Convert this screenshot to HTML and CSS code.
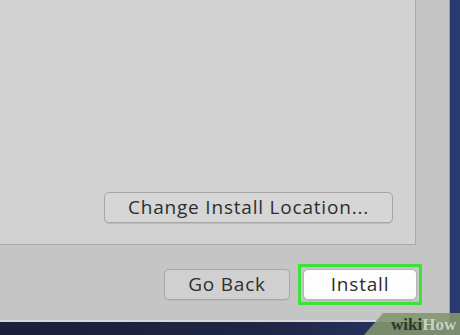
FILE: index.html
```html
<!DOCTYPE html>
<html>
<head>
<meta charset="utf-8">
<link rel="stylesheet" href="styles.css">
</head>
<body>
<div class="desk">
  <div class="window">
    <div class="pane">
      <button class="btn loc">Change Install Location...</button>
    </div>
    <div class="footer">
      <button class="btn back">Go Back</button>
      <span class="hl"><button class="btn install">Install</button></span>
    </div>
  </div>
  <div class="wm"><span class="wiki">wiki</span><span class="how">How</span></div>
</div>
</body>
</html>
```
FILE: styles.css
```css
html, body { margin: 0; padding: 0; }
body { width: 460px; height: 335px; overflow: hidden; background: #1b2140; }
.desk {
  position: relative;
  width: 460px; height: 335px;
  background: linear-gradient(90deg, #1a1e38 0%, #1f2646 60%, #2b3a72 100%);
}
.window {
  width: 449px; height: 320px;
  background: #c5c5c5;
  border-bottom: 2px solid #d9d9d9;
  display: flex; flex-direction: column;
  box-shadow: 1px 0 0 #9a9aa0;
}
.pane {
  width: 416px; height: 245px;
  background: #d2d2d2;
  border-right: 1px solid #a9a9a9;
  border-bottom: 1px solid #a9a9a9;
  display: flex; justify-content: flex-end; align-items: flex-end;
  box-sizing: border-box;
  padding: 0 22px 21px 0;
}
.btn {
  font-family: "Open Sans", "Liberation Sans", Arial, sans-serif;
  font-size: 19px;
  font-weight: 500;
  color: #2e2e2e;
  border: 1px solid #a6a6a6;
  border-radius: 5px;
  background: #d6d6d6;
  box-shadow: 0 1px 0 #bcbcbc;
  height: 31px;
  padding: 0;
  margin: 0;
  line-height: 29px;
  letter-spacing: 0.8px;
}
.loc { width: 289px; }
.footer {
  display: flex; justify-content: flex-end; align-items: center;
  padding: 19px 27px 0 0;
  gap: 8px;
}
.back { width: 126px; background: #d0d0d0; }
.hl {
  display: flex;
  border: 3px solid #3ee03a;
  padding: 2px;
  border-radius: 1px;
}
.install { width: 114px; background: #fdfdfd; border-color: #b5b5b5; }
.wm {
  position: absolute;
  left: 364px; bottom: 0;
  width: 96px; height: 22px;
  background: rgba(130, 150, 110, 0.9);
  clip-path: polygon(19px 0, 100% 0, 100% 100%, 0 100%);
  font-family: "Liberation Serif", serif;
  font-weight: bold;
  font-size: 17px;
  line-height: 24px;
  padding-left: 27px;
  box-sizing: border-box;
  white-space: nowrap;
}
.wiki { color: #2c3a2a; }
.how { color: #c9d2c0; }
```
